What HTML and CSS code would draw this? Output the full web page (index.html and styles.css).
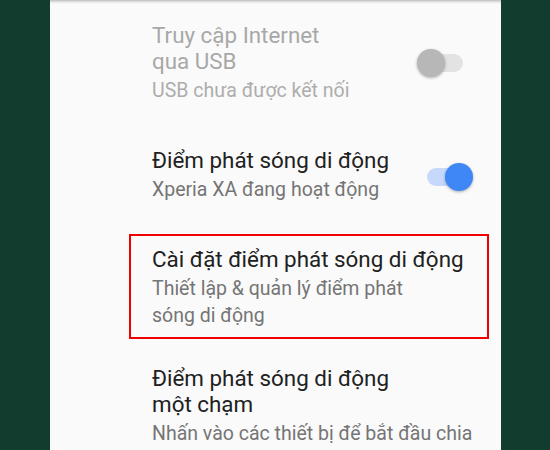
FILE: index.html
```html
<!DOCTYPE html>
<html lang="vi">
<head>
<meta charset="utf-8">
<title>Điểm phát sóng</title>
<link rel="stylesheet" href="styles.css">
</head>
<body>
<div class="screen">
  <div class="side"></div>
  <div class="panel">
    <div class="item item-usb disabled">
      <div class="text">
        <div class="title">Truy cập Internet<br>qua USB</div>
        <div class="subtitle">USB chưa được kết nối</div>
      </div>
      <div class="switch off"><span class="track"></span><span class="thumb"></span></div>
    </div>
    <div class="item item-hotspot">
      <div class="text">
        <div class="title">Điểm phát sóng di động</div>
        <div class="subtitle">Xperia XA đang hoạt động</div>
      </div>
      <div class="switch on"><span class="track"></span><span class="thumb"></span></div>
    </div>
    <div class="item item-settings">
      <div class="text">
        <div class="title">Cài đặt điểm phát sóng di động</div>
        <div class="subtitle">Thiết lập &amp; quản lý điểm phát<br>sóng di động</div>
      </div>
    </div>
    <div class="item item-touch">
      <div class="text">
        <div class="title">Điểm phát sóng di động<br>một chạm</div>
        <div class="subtitle">Nhấn vào các thiết bị để bắt đầu chia<br>sẻ kết nối dữ liệu qua Wi-Fi</div>
      </div>
    </div>
  </div>
  <div class="side"></div>
</div>
</body>
</html>
```
FILE: styles.css
```css
html, body {
  margin: 0;
  padding: 0;
  height: 100%;
  overflow: hidden;
}
body {
  font-family: Roboto, "Noto Sans", "DejaVu Sans", sans-serif;
  background: #123c2e;
}
.screen {
  display: flex;
  height: 450px;
  width: 550px;
}
.side {
  flex: 0 0 50px;
  background: #123c2e;
}
.side:last-child {
  flex-basis: 49px;
}
.panel {
  flex: 0 0 451px;
  background: linear-gradient(to bottom, #bdbdbd 0, #dcdcdc 1.5px, #f2f2f2 3px, #fafafa 4px) top / 100% 4px no-repeat, #fafafa;
  overflow: hidden;
}
.item {
  display: flex;
  align-items: center;
  padding: 0 28px 0 102px;
}
.text {
  flex: 1;
}
.title {
  font-size: 22.4px;
  line-height: 26px;
  color: #212121;
  white-space: nowrap;
}
.subtitle {
  margin-top: 3px;
  font-size: 19.5px;
  line-height: 27px;
  color: #757575;
  white-space: nowrap;
}
.disabled .title {
  color: #a8a8a8;
}
.disabled .subtitle {
  color: #adadad;
}
.item-usb {
  margin-top: 22px;
}
.item-hotspot {
  margin-top: 43px;
}
.item-settings {
  margin: 31px 12px 0 79px;
  border: 2px solid #f20000;
  padding: 10px 0 8px 21px;
}
.item-touch {
  margin-top: 26px;
}
.switch {
  position: relative;
  width: 56px;
  height: 28px;
  flex: 0 0 56px;
}
.track {
  position: absolute;
  left: 8px;
  top: 5px;
  width: 38px;
  height: 18px;
  border-radius: 9px;
  background: #e3e3e3;
}
.thumb {
  position: absolute;
  top: 0;
  left: 0;
  width: 28px;
  height: 28px;
  border-radius: 50%;
  background: #b7b7b7;
  box-shadow: 0 1px 3px rgba(0, 0, 0, 0.3);
}
.switch.on {
  margin-top: 3px;
}
.switch.on .track {
  left: 10px;
  background: #c6d8fb;
}
.switch.on .thumb {
  left: 28px;
  background: #3f86f6;
}
```
